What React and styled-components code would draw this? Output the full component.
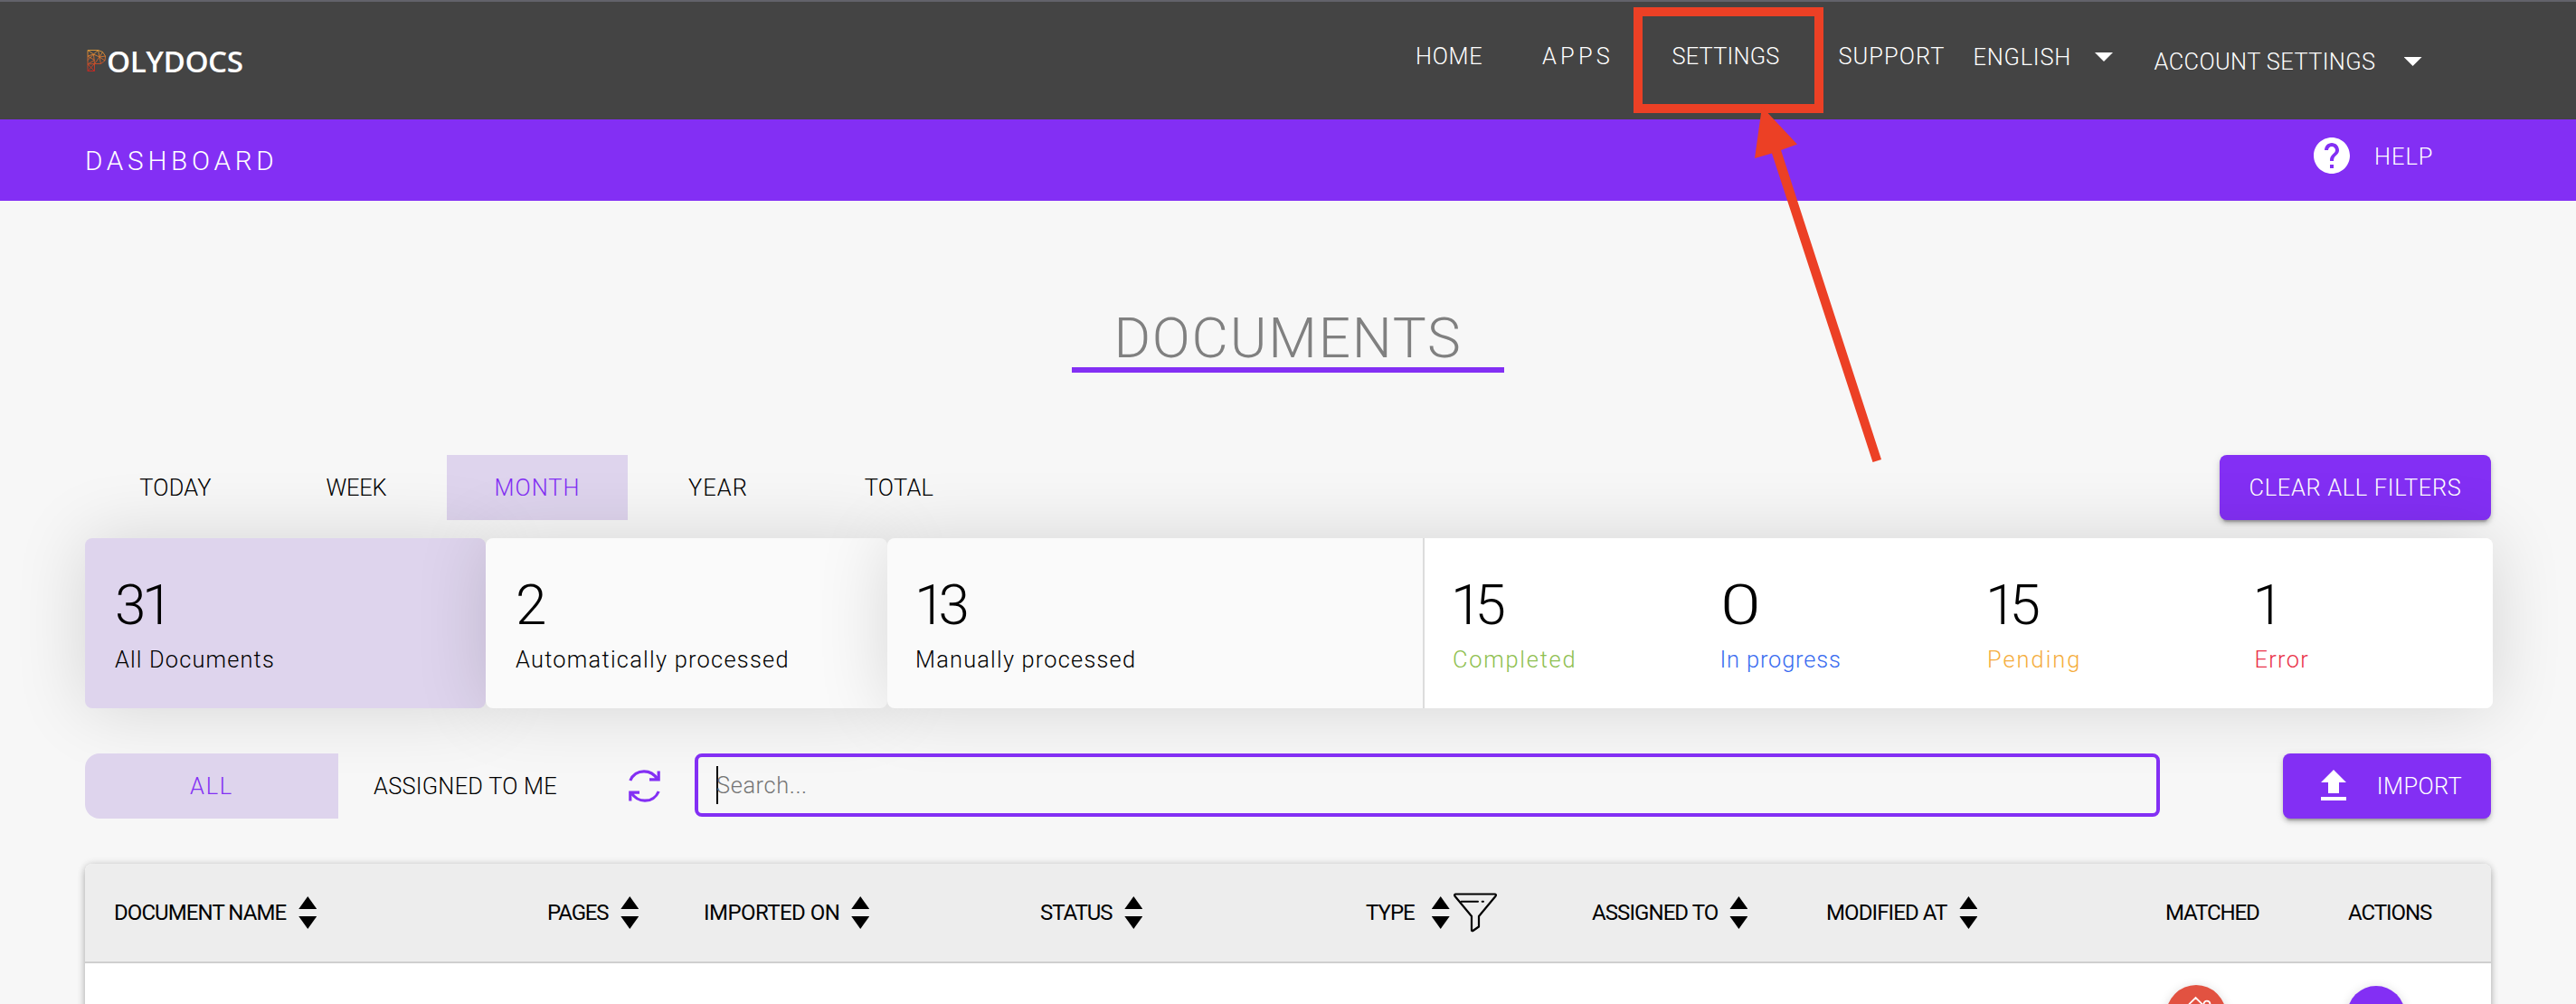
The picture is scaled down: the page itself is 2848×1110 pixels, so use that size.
import React from "react";
import styled, { createGlobalStyle } from "styled-components";

const PURPLE = "#832ff4";
const LILAC = "#ded4ed";
const MARK = "#ec4025";

const GlobalStyle = createGlobalStyle`
  *, *::before, *::after { box-sizing: border-box; }
  html, body { margin: 0; padding: 0; background: #f7f7f7; overflow: hidden; }
  svg { display: block; flex: none; }
  button { border: 0; background: none; padding: 0; margin: 0; font: inherit; color: inherit; }
`;

const Page = styled.div`
  position: relative;
  display: flex;
  flex-direction: column;
  width: 2848px;
  height: 1110px;
  overflow: hidden;
  background: #f7f7f7;
  color: #000;
  font-family: Roboto, "Liberation Sans", sans-serif;
  font-weight: 325;
  font-size: 25.4px;
  line-height: 30px;
`;

const Text = styled.span`
  white-space: nowrap;
  letter-spacing: ${(p) => p.$track || 0}px;
`;

/* ---------- top bar ---------- */

const TopBar = styled.header`
  display: flex;
  align-items: flex-start;
  height: 132px;
  flex: none;
  padding-left: 96px;
  border-top: 2px solid #62626a;
  background: #444;
  color: #fff;
`;

const Logo = styled.div`
  display: flex;
  align-items: center;
  width: 1469px;
  height: 130px;
  font: 650 33.3px "Open Sans", sans-serif;
`;

const LogoText = styled.span`
  margin-left: 0;
  letter-spacing: -0.5px;
`;

const NavItem = styled.a`
  display: flex;
  align-items: center;
  flex: none;
  width: ${(p) => p.$width}px;
  margin-top: ${(p) => 45 + (p.$drop || 0)}px;
`;

const Caret = styled.i`
  width: 20px;
  height: 10px;
  margin-left: ${(p) => p.$gap}px;
  background: #fff;
  clip-path: polygon(0 0, 100% 0, 50% 100%);
`;

/* ---------- title bar ---------- */

const SubBar = styled.div`
  display: flex;
  justify-content: space-between;
  flex: none;
  height: 90px;
  padding: 0 151px 0 94px;
  background: ${PURPLE};
  color: #fff;
`;

const Crumb = styled.div`
  padding-top: 31px;
  font-size: 29.6px;
`;

const Help = styled.a`
  display: flex;
  align-items: center;
  width: 143px;
  height: 48px;
  margin-top: 16px;
  svg { margin-right: 23px; }
  span { margin-top: 2px; }
`;

/* ---------- content ---------- */

const Title = styled.h1`
  align-self: center;
  flex: none;
  width: 478px;
  height: 70px;
  margin: 120px 0 0;
  border-bottom: 6px solid ${PURPLE};
  color: #808080;
  font-size: 62px;
  font-weight: 290;
  line-height: 64px;
  text-align: center;
`;

const Bar = styled.div`
  display: flex;
  flex: none;
  width: 2660px;
  height: 72px;
  margin: ${(p) => p.$top}px 0 0 94px;
`;

const Tab = styled.button`
  width: ${(p) => p.$width || 200}px;
  height: 72px;
  color: ${(p) => (p.$active ? PURPLE : "#000")};
  background: ${(p) => (p.$active ? LILAC : "transparent")};
  border-radius: ${(p) => (p.$first ? "16px 0 0 16px" : 0)};
`;

const Button = styled.button`
  display: flex;
  align-items: center;
  justify-content: center;
  width: ${(p) => p.$width}px;
  height: 72px;
  margin-left: auto;
  border-radius: 8px;
  background: ${PURPLE};
  color: #fff;
  box-shadow: 0 6px 2px -4px rgba(0, 0, 0, 0.2), 0 4px 4px rgba(0, 0, 0, 0.14),
    0 2px 10px rgba(0, 0, 0, 0.12);
  svg { margin-right: 24px; }
`;

const Cards = styled.section`
  display: flex;
  flex: none;
  width: 2662px;
  height: 188px;
  margin: 20px 0 0 94px;
`;

const Card = styled.div`
  display: flex;
  flex: none;
  width: ${(p) => p.$width}px;
  overflow: hidden;
  border-radius: 8px;
  background: ${(p) => (p.$active ? LILAC : "#fafafa")};
  box-shadow: 0 0 80px rgba(0, 0, 0, 0.14);
`;

const Metric = styled.div`
  flex: none;
  width: ${(p) => p.$width || 295.5}px;
  padding: 43px 0 0 ${(p) => p.$pad || 33}px;
`;

const Count = styled.div`
  width: max-content;
  margin-left: ${(p) => p.$shift || 0}px;
  font-size: 62px;
  font-weight: 285;
  line-height: 62px;
  letter-spacing: ${(p) => p.$track || 0}px;
  transform: scaleX(${(p) => p.$stretch || 1});
  transform-origin: 0 50%;
`;

const Caption = styled.div`
  margin-top: 14px;
  color: ${(p) => p.$color || "#000"};
  white-space: nowrap;
  letter-spacing: ${(p) => p.$track}px;
`;

const States = styled.div`
  display: flex;
  width: 1185px;
  border-left: 2px solid #dcdcdc;
  background: #fff;
`;

const RefreshButton = styled.button`
  width: 35px;
  margin-left: 40px;
`;

const SearchBox = styled.div`
  display: flex;
  align-items: center;
  width: 1620px;
  height: 70px;
  margin-left: 38px;
  padding-left: 20px;
  border: 4px solid ${PURPLE};
  border-radius: 8px;
  color: #757575;
`;

const Cursor = styled.i`
  width: 2px;
  height: 42px;
  margin-right: -2px;
  background: #000;
`;

/* ---------- table ---------- */

const Table = styled.section`
  flex: none;
  width: 2660px;
  height: 200px;
  margin: 50px 0 0 94px;
  border-radius: 8px;
  background: #fff;
  box-shadow: 0 4px 8px rgba(0, 0, 0, 0.22), 0 0 8px rgba(0, 0, 0, 0.14);
`;

const Row = styled.div`
  display: grid;
  grid-template-columns: 479px 173px 372px 360px 250px 259px 375px 202px 1fr;
  padding-left: 32px;
`;

const HeadRow = styled(Row)`
  height: 110px;
  border-bottom: 2px solid #cfcfcf;
  border-radius: 8px 8px 0 0;
  background: #ededed;
  font-size: 24px;
  font-weight: 400;
`;

const HeadCell = styled.div`
  display: flex;
  align-items: center;
`;

const Sorter = styled.span`
  display: grid;
  gap: 8px;
  width: 20px;
  margin-left: ${(p) => p.$gap || 14}px;
  &::before, &::after { content: ""; height: 14px; background: #000; }
  &::before { clip-path: polygon(50% 0, 100% 100%, 0 100%); }
  &::after { clip-path: polygon(0 0, 100% 0, 50% 100%); }
`;

const Filter = styled.span`
  margin-left: 4px;
`;

const Badge = styled.span`
  grid-column: ${(p) => p.$col};
  display: block;
  width: ${(p) => p.$size}px;
  height: ${(p) => p.$size}px;
  margin: ${(p) => p.$top}px 0 0 ${(p) => p.$left}px;
  border-radius: 50%;
  background: ${(p) => p.$color};
  box-shadow: 0 2px 12px rgba(0, 0, 0, 0.16);
`;

/* ---------- annotation over the page ---------- */

const Highlight = styled.div`
  position: absolute;
  left: 1806px;
  top: 8px;
  width: 210px;
  height: 117px;
  border: 10px solid ${MARK};
`;

const Pointer = styled.svg`
  position: absolute;
  left: 1930px;
  top: 110px;
`;

const LogoMark = () => (
  <svg width="22" height="26" viewBox="0 0 22 26" fill="none" stroke="url(#mark)" strokeWidth="0.9">
    <defs>
      <linearGradient id="mark" gradientUnits="userSpaceOnUse" x1="0" y1="0" x2="0" y2="26">
        <stop offset="0" stopColor="#e9a53a" />
        <stop offset="0.5" stopColor="#d0602a" />
        <stop offset="1" stopColor="#cc1f1f" />
      </linearGradient>
    </defs>
    <path d="M1 1.500H12.500L17.500 3.500L20.500 8L20 13L15.500 16.500H8.500V24.500H1Z" />
    <path d="M1 1.500L7.500 6L12.500 1.500L14 9L7.500 6L8.500 16.500L14 9L20.500 8M14 9L15.500 16.500M14 9L17.500 3.500M14 9L20 13M1 8L7.500 6M1 8L8.500 12.500L1 17L8.500 24.500M1 24.500L8.500 16.500L1 17M7.500 6L1 12.500" />
  </svg>
);

const HelpIcon = () => (
  <svg width="48" height="48" viewBox="0 0 24 24" fill="#fff">
    <path d="M12 2C6.480 2 2 6.480 2 12s4.480 10 10 10 10-4.480 10-10S17.520 2 12 2zm1 17h-2v-2h2v2zm2.070-7.750l-.9.920C13.450 12.900 13 13.500 13 15h-2v-.5c0-1.100.450-2.100 1.170-2.830l1.240-1.260c.370-.360.590-.860.590-1.410 0-1.100-.9-2-2-2s-2 .9-2 2H8c0-2.210 1.790-4 4-4s4 1.790 4 4c0 .880-.360 1.680-.930 2.250z" />
  </svg>
);

const UploadIcon = () => (
  <svg width="48" height="48" viewBox="0 0 24 24" fill="#fff">
    <path d="M9 16h6v-6h4l-7-7-7 7h4zm-4 2h14v2H5z" />
  </svg>
);

const RefreshIcon = () => (
  <svg width="35" height="36" viewBox="0 0 35 36" fill="none" stroke={PURPLE} strokeWidth="3.200">
    <path d="M1.800 12C4.500 5.500 10.500 1.800 17 1.800C23.500 1.800 28.500 5 32 10.500M33.200 1.500V10.900H23" />
    <path d="M33.200 24C30.500 30.500 24.500 34.200 18 34.200C11.500 34.200 6.500 31 3 25.500M1.800 34.500V25.100H12" />
  </svg>
);

const FunnelIcon = () => (
  <svg width="48" height="44" viewBox="0 0 48 44" fill="none" stroke="#000" strokeWidth="2.200" strokeLinejoin="round" strokeLinecap="round">
    <path d="M2.500 1.500H45.500C47 1.500 47.200 2.700 46.500 3.700L28 26V37.500L21.500 42C20.800 42.500 20 42.200 20 41.300V26L1.500 3.700C0.800 2.700 1.200 1.500 2.500 1.500Z" />
    <path d="M8.500 9.800H27M31.700 9.800H33" strokeWidth="2" />
  </svg>
);

const MatchIcon = () => (
  <svg width="66" height="66" viewBox="0 0 66 66" fill="none" stroke="#fff" strokeWidth="1.800">
    <path d="M24.500 22L32.500 14L41 22.500M41.500 21C41.500 16.500 48.500 16.500 48.500 21.500" />
  </svg>
);

const periods = [
  ["TODAY", 0.23],
  ["WEEK", -0.2],
  ["MONTH", 1],
  ["YEAR", 1.1],
  ["TOTAL", 0.3],
];

const states = [
  { n: "15", track: -8, shift: -2, label: "Completed", lt: 1.75, color: "#8fc050" },
  { n: "0", stretch: 1.3, label: "In progress", lt: 0.85, color: "#3a6cf0" },
  { n: "15", track: -8, shift: -2, label: "Pending", lt: 2, color: "#f5ad3c" },
  { n: "1", shift: -2, label: "Error", lt: 1.3, color: "#ea3349" },
];

const columns = [
  { name: "DOCUMENT NAME", track: -0.92, sort: true },
  { name: "PAGES", track: -1.2, sort: true },
  { name: "IMPORTED ON", track: -0.55, sort: true, gap: 13 },
  { name: "STATUS", track: -1.1, sort: true },
  { name: "TYPE", track: -1, sort: true, gap: 19, filter: true },
  { name: "ASSIGNED TO", track: -0.92, sort: true, gap: 13 },
  { name: "MODIFIED AT", track: -0.9, sort: true },
  { name: "MATCHED", track: -1.1 },
  { name: "ACTIONS", track: -1.05 },
];

export default function App() {
  return (
    <Page>
      <GlobalStyle />
      <TopBar>
        <Logo>
          <LogoMark />
          <LogoText>OLYDOCS</LogoText>
        </Logo>
        <NavItem $width={140}><Text $track={0.7}>HOME</Text></NavItem>
        <NavItem $width={143.5}><Text $track={4.2}>APPS</Text></NavItem>
        <NavItem $width={184}><Text $track={0.18}>SETTINGS</Text></NavItem>
        <NavItem $width={149}><Text $track={1.05}>SUPPORT</Text></NavItem>
        <NavItem $width={200} $drop={1}>
          <Text $track={0.78}>ENGLISH</Text>
          <Caret $gap={26} />
        </NavItem>
        <NavItem $width={300} $drop={6}>
          <Text $track={0.4}>ACCOUNT SETTINGS</Text>
          <Caret $gap={31} />
        </NavItem>
      </TopBar>
      <SubBar>
        <Crumb><Text $track={4.75}>DASHBOARD</Text></Crumb>
        <Help>
          <HelpIcon />
          <Text $track={1}>HELP</Text>
        </Help>
      </SubBar>

      <Title><Text $track={1.8}>DOCUMENTS</Text></Title>

      <Bar $top={91}>
        {periods.map(([name, track]) => (
          <Tab key={name} $active={name === "MONTH"}><Text $track={track}>{name}</Text></Tab>
        ))}
        <Button $width={300}><Text $track={0.7}>CLEAR ALL FILTERS</Text></Button>
      </Bar>

      <Cards>
        <Card $width={443} $active>
          <Metric $width={443}>
            <Count $track={-4.4}>31</Count>
            <Caption $track={1.15}>All Documents</Caption>
          </Metric>
        </Card>
        <Card $width={444}>
          <Metric $width={444}>
            <Count>2</Count>
            <Caption $track={1.25}>Automatically processed</Caption>
          </Metric>
        </Card>
        <Card $width={1775}>
          <Metric $width={592} $pad={31}>
            <Count $track={-8} $shift={-1}>13</Count>
            <Caption $track={1.2}>Manually processed</Caption>
          </Metric>
          <States>
            {states.map((s) => (
              <Metric key={s.label} $pad={31}>
                <Count $track={s.track} $shift={s.shift} $stretch={s.stretch}>{s.n}</Count>
                <Caption $track={s.lt} $color={s.color}>{s.label}</Caption>
              </Metric>
            ))}
          </States>
        </Card>
      </Cards>

      <Bar $top={50}>
        <Tab $width={280} $active $first><Text $track={1.8}>ALL</Text></Tab>
        <Tab $width={281}><Text $track={0.24}>ASSIGNED TO ME</Text></Tab>
        <RefreshButton aria-label="Refresh"><RefreshIcon /></RefreshButton>
        <SearchBox>
          <Cursor />
          <Text $track={0.6}>Search...</Text>
        </SearchBox>
        <Button $width={230}>
          <UploadIcon />
          <Text $track={0.4}>IMPORT</Text>
        </Button>
      </Bar>

      <Table>
        <HeadRow>
          {columns.map((c) => (
            <HeadCell key={c.name}>
              <Text $track={c.track}>{c.name}</Text>
              {c.sort && <Sorter $gap={c.gap} />}
              {c.filter && <Filter><FunnelIcon /></Filter>}
            </HeadCell>
          ))}
        </HeadRow>
        <Row>
          <Badge $col={8} $size={66} $top={24} $left={1} $color="#e25241"><MatchIcon /></Badge>
          <Badge $col={9} $size={64} $top={25} $left={-1} $color={PURPLE} />
        </Row>
      </Table>

      <Highlight />
      <Pointer width="160" height="410" viewBox="1930 110 160 410" fill={MARK}>
        <path d="M1948 118L1987 159.500L1969 166L2080 508L2070.500 511L1959 169.500L1940 175Z" />
      </Pointer>
    </Page>
  );
}
